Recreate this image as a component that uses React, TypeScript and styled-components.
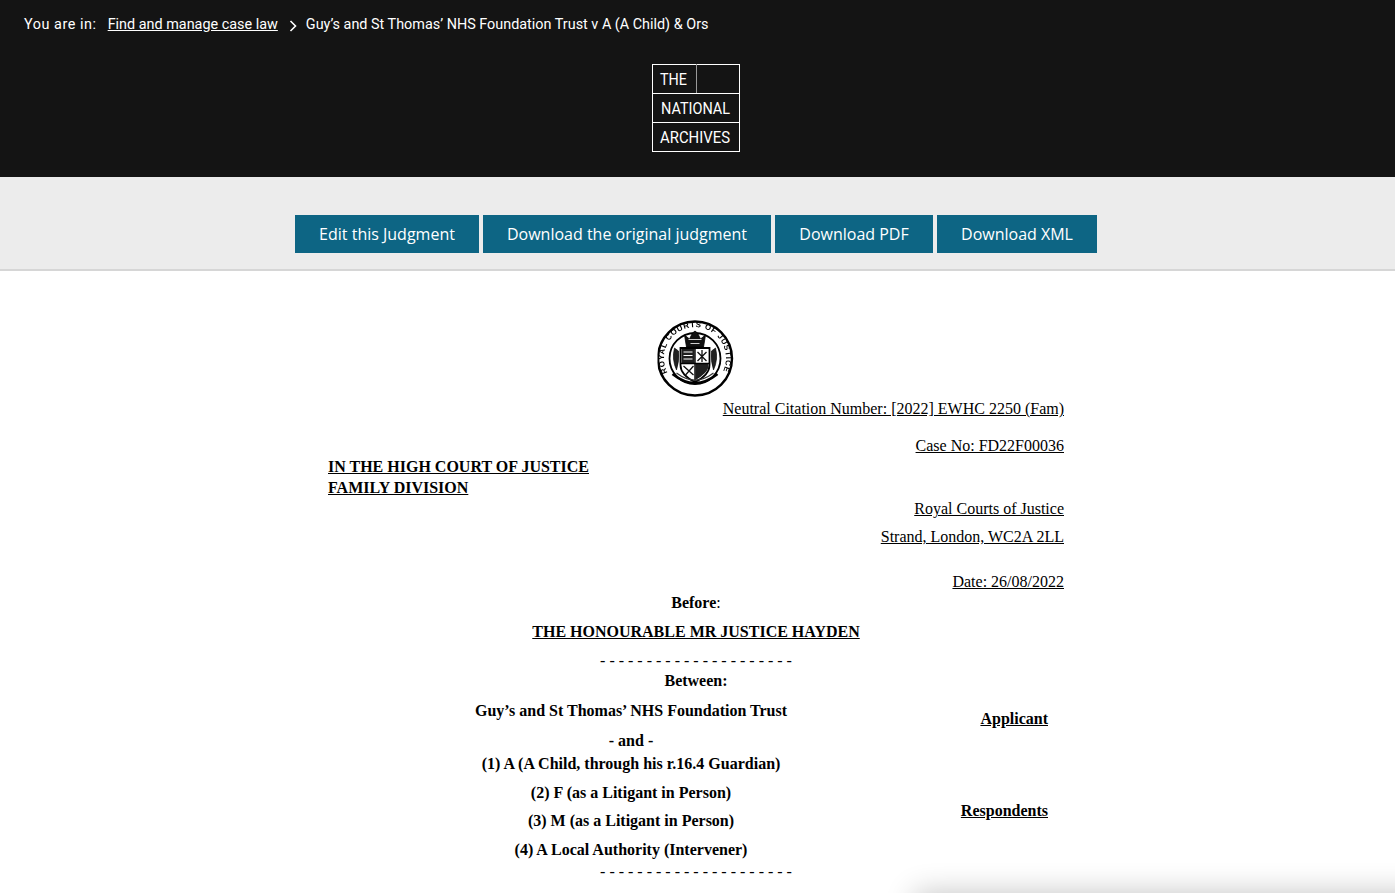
import styled, { createGlobalStyle } from "styled-components";

const GlobalStyle = createGlobalStyle`
	html, body {
		margin: 0;
		padding: 0;
		background: #fff;
		overflow: hidden;
	}
`;

const Header = styled.header`
	height: 177px;
	box-sizing: border-box;
	padding: 16px 24px 0;
	background-color: #141414;
	color: #fff;
	font-family: Roboto, "Liberation Sans", sans-serif;
	font-size: 14.4px;
`;

const Breadcrumbs = styled.nav`
	display: flex;
	align-items: center;
	height: 18px;
	line-height: 18px;
`;

const CrumbLabel = styled.span`
	margin-right: 11px;
	letter-spacing: 0.55px;
`;

const CrumbLink = styled.a`
	color: #fff;
	text-decoration: underline;
`;

const CrumbArrow = styled.svg`
	width: 8px;
	height: 12px;
	margin: 1px 9px 0 11px;
`;

const LogoWrap = styled.div`
	display: flex;
	justify-content: center;
	margin-top: 30px;
	padding-right: 3px;
`;

const ActionBar = styled.div`
	display: flex;
	justify-content: center;
	gap: 4px;
	height: 94px;
	box-sizing: border-box;
	padding: 38px 3px 0 0;
	background-color: #ececec;
	border-bottom: 2px solid #d6d6d6;
`;

const ActionButton = styled.a<{ $width: number }>`
	display: flex;
	align-items: center;
	justify-content: center;
	width: ${({ $width }) => $width}px;
	height: 38px;
	background-color: #0d6584;
	color: #fff;
	font-family: "Open Sans", sans-serif;
	font-size: 16px;
`;

const Judgment = styled.main`
	width: 736px;
	margin: 0 auto;
	padding: 49px 0 0 0;
	transform: translateX(-1.5px);
	color: #000;
	font-family: "Liberation Serif", "Times New Roman", serif;
	font-size: 16px;
	line-height: 18px;
`;

const Seal = styled.svg`
	display: block;
	width: 78px;
	height: 77px;
	margin: 0 auto;
	filter: blur(0.25px);
`;

const Line = styled.p<{ $gap: number; $align?: string; $bold?: boolean; $underline?: boolean }>`
	margin: ${({ $gap }) => $gap}px 0 0;
	text-align: ${({ $align }) => $align || "center"};
	font-weight: ${({ $bold }) => ($bold ? 700 : 400)};
	text-decoration: ${({ $underline }) => ($underline ? "underline" : "none")};
`;

const Court = styled.p`
	margin: 1px 0 0;
	font-weight: 700;
	line-height: 21px;
	text-decoration: underline;
`;

const Parties = styled.div`
	display: grid;
	grid-template-columns: 606px 1fr;
	margin-top: 12px;
	font-weight: 700;
`;

const PartyNames = styled.div`
	text-align: center;
`;

const PartyRoles = styled.div`
	padding-right: 16px;
	text-align: right;
`;

const PartyRole = styled.p<{ $gap: number }>`
	margin: ${({ $gap }) => $gap}px 0 0;
	text-decoration: underline;
`;

const CornerShadow = styled.div`
	position: fixed;
	left: 915px;
	right: -40px;
	bottom: -40px;
	height: 40px;
	box-shadow: 0 0 30px rgba(0, 0, 0, 0.24);
`;

function Logo() {
	const labels = [
		{ text: "THE", x: 8, y: 21, w: 27 },
		{ text: "NATIONAL", x: 9, y: 50, w: 69 },
		{ text: "ARCHIVES", x: 8, y: 79, w: 70 },
	];
	return (
		<svg width="88" height="88" viewBox="0 0 88 88">
			<rect x="0.5" y="0.5" width="87" height="87" fill="none" stroke="#fff" />
			<line x1="0" y1="29.5" x2="88" y2="29.5" stroke="#fff" />
			<line x1="0" y1="58.5" x2="88" y2="58.5" stroke="#fff" />
			<line x1="44.5" y1="0" x2="44.5" y2="29" stroke="#999" />
			{labels.map((label) => (
				<text
					key={label.text}
					x={label.x}
					y={label.y}
					textLength={label.w}
					lengthAdjust="spacingAndGlyphs"
					fill="#fff"
					fontFamily="Roboto, sans-serif"
					fontSize="16.5"
				>
					{label.text}
				</text>
			))}
		</svg>
	);
}

function CourtSeal() {
	return (
		<Seal viewBox="1 0 78 77">
			<defs>
				<path id="seal-arc" d="M 11 52.5 A 31 31 0 1 1 66 52.5" />
			</defs>
			<ellipse cx="38.5" cy="38.5" rx="37" ry="37" fill="none" stroke="#000" strokeWidth="2.4" />
			<ellipse cx="38.5" cy="38.5" rx="25.5" ry="25.5" fill="none" stroke="#000" strokeWidth="1.8" />
			<text fontFamily="Liberation Sans, sans-serif" fontSize="7.9" fontWeight="700" fill="#000">
				<textPath href="#seal-arc" textLength="125" lengthAdjust="spacing">
					ROYAL COURTS OF JUSTICE
				</textPath>
			</text>
			{/* crown */}
			<path
				d="M30 27 L28 15 L33 19 L36 13 L38.5 11 L41 13 L44 19 L49 15 L47 27 Z"
				fill="#111"
				stroke="#000"
				strokeWidth="0.8"
			/>
			<path d="M32 19.5 H45 M34 23.5 H43" stroke="#fff" strokeWidth="0.8" />
			{/* shield */}
			<path d="M24 28 H53 V45 Q53 55 38.5 62 Q24 55 24 45 Z" fill="#fff" stroke="#000" strokeWidth="1.8" />
			<path d="M25 29 H38 V43 H25 Z M39 44 H52 V47 Q51 53 39 60 Z" fill="#1e1e1e" />
			<path d="M38.5 28 V61 M24 43.5 H53" stroke="#000" strokeWidth="1.4" />
			<path d="M27 32 H36 M27 35.5 H36 M27 39 H36" stroke="#fff" strokeWidth="1" />
			<path d="M41 32 L50 41 M50 32 L41 41 M45.5 30 V42" stroke="#111" strokeWidth="1.3" />
			<path d="M27 46 L37 55 M37 46 L29 55" stroke="#111" strokeWidth="1.3" />
			{/* sprays and ribbon */}
			<path d="M18 28 Q15 39 20 50 Q23 41 22 31 Z M59 28 Q62 39 57 50 Q54 41 55 31 Z" fill="#222" stroke="#000" strokeWidth="0.6" />
			<path d="M16 54 Q38.5 72 61 54" fill="none" stroke="#000" strokeWidth="2.6" />
			<path d="M20 53 Q38.5 67 57 53" fill="none" stroke="#333" strokeWidth="1.1" />
		</Seal>
	);
}

export default function App() {
	return (
		<>
			<GlobalStyle />
			<Header>
				<Breadcrumbs>
					<CrumbLabel>You are in:</CrumbLabel>
					<CrumbLink>Find and manage case law</CrumbLink>
					<CrumbArrow viewBox="0 0 8 12">
						<path d="M1.5 1 L6.5 6 L1.5 11" fill="none" stroke="#fff" strokeWidth="1.6" />
					</CrumbArrow>
					<span>Guy’s and St Thomas’ NHS Foundation Trust v A (A Child) &amp; Ors</span>
				</Breadcrumbs>
				<LogoWrap>
					<Logo />
				</LogoWrap>
			</Header>
			<ActionBar>
				<ActionButton $width={184}>Edit this Judgment</ActionButton>
				<ActionButton $width={288}>Download the original judgment</ActionButton>
				<ActionButton $width={158}>Download PDF</ActionButton>
				<ActionButton $width={160}>Download XML</ActionButton>
			</ActionBar>
			<Judgment>
				<CourtSeal />
				<Line $gap={3} $align="right" $underline>
					Neutral Citation Number: [2022] EWHC 2250 (Fam)
				</Line>
				<Line $gap={19} $align="right" $underline>
					Case No: FD22F00036
				</Line>
				<Court>
					IN THE HIGH COURT OF JUSTICE
					<br />
					FAMILY DIVISION
				</Court>
				<Line $gap={2} $align="right" $underline>
					Royal Courts of Justice
				</Line>
				<Line $gap={10} $align="right" $underline>
					Strand, London, WC2A 2LL
				</Line>
				<Line $gap={27} $align="right" $underline>
					Date: 26/08/2022
				</Line>
				<Line $gap={3}>
					<b>Before</b>:
				</Line>
				<Line $gap={11} $bold $underline>
					THE HONOURABLE MR JUSTICE HAYDEN
				</Line>
				<Line $gap={11}>- - - - - - - - - - - - - - - - - - - - -</Line>
				<Line $gap={2} $bold>
					Between:
				</Line>
				<Parties>
					<PartyNames>
						<Line $gap={0} $bold>Guy’s and St Thomas’ NHS Foundation Trust</Line>
						<Line $gap={12} $bold>- and -</Line>
						<Line $gap={5} $bold>(1) A (A Child, through his r.16.4 Guardian)</Line>
						<Line $gap={11} $bold>(2) F (as a Litigant in Person)</Line>
						<Line $gap={10} $bold>(3) M (as a Litigant in Person)</Line>
						<Line $gap={11} $bold>(4) A Local Authority (Intervener)</Line>
					</PartyNames>
					<PartyRoles>
						<PartyRole $gap={8}>Applicant</PartyRole>
						<PartyRole $gap={74}>Respondents</PartyRole>
					</PartyRoles>
				</Parties>
				<Line $gap={4}>- - - - - - - - - - - - - - - - - - - - -</Line>
			</Judgment>
			<CornerShadow />
		</>
	);
}
